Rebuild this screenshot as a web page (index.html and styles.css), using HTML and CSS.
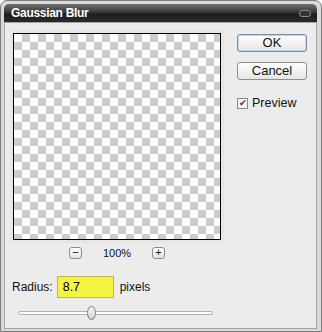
FILE: index.html
```html
<!DOCTYPE html>
<html lang="en">

<head>
    <meta charset="UTF-8">
    <title>Gaussian Blur</title>
    <link rel="stylesheet" href="styles.css">
</head>

<body>
    <div class="window">
        <div class="titlebar">
            <span class="title">Gaussian Blur</span>
            <span class="close"></span>
        </div>
        <div class="client">
            <div class="main">
                <div class="preview"></div>
                <div class="zoomRow">
                    <span class="zoomBtn">&minus;</span>
                    <span class="zoomValue">100%</span>
                    <span class="zoomBtn">+</span>
                </div>
                <div class="radiusRow">
                    <label for="radius">Radius:</label>
                    <input id="radius" class="radiusInput" value="8.7">
                    <span>pixels</span>
                </div>
                <div class="slider">
                    <div class="track"></div>
                    <div class="thumb"></div>
                </div>
            </div>
            <div class="side">
                <button class="btn default">OK</button>
                <button class="btn">Cancel</button>
                <label class="check"><span class="box">&#10004;</span>Preview</label>
            </div>
        </div>
    </div>
</body>

</html>
```

FILE: styles.css
```css
body {
    margin: 0;
    font-family: "Liberation Sans", Arial, sans-serif;
    font-size: 12px;
    color: #111;
}

.window {
    box-sizing: border-box;
    width: 322px;
    height: 332px;
    border: 1px solid #7c7c7c;
    border-radius: 7px 7px 0 0;
    background: #d9d9d9;
    padding: 3px 4px 2px 3px;
    display: flex;
    flex-direction: column;
}

.titlebar {
    height: 18px;
    border-radius: 5px 5px 0 0;
    background: linear-gradient(#707070, #3a3a3a 45%, #1e1e1e 55%, #2a2a2a);
    display: flex;
    align-items: center;
    justify-content: space-between;
    padding: 0 6px 0 7px;
}

.title {
    color: #fff;
    font-weight: bold;
    font-size: 12px;
    letter-spacing: -0.3px;
}

.close {
    width: 10px;
    height: 5px;
    border: 1px solid #8a8a8a;
    border-radius: 3px;
    background: #333;
}

.client {
    flex: 1;
    display: flex;
    border: 1px solid #a4a4a4;
    background: #ececec;
}

.main {
    width: 216px;
    padding: 10px 0 0 8px;
}

.preview {
    width: 206px;
    height: 205px;
    border: 1px solid #000;
    background: repeating-conic-gradient(#cccccc 0 25%, #ffffff 0 50%) 0 0 / 16px 16px;
    box-shadow: 0 0 0 3px #e6e6e6;
}

.zoomRow {
    display: flex;
    justify-content: center;
    align-items: center;
    gap: 21px;
    width: 208px;
    margin-top: 7px;
    font-size: 11px;
}

.zoomBtn {
    width: 11px;
    height: 10px;
    border: 1px solid #8c8c8c;
    border-radius: 3px;
    background: linear-gradient(#fff, #e2e2e2);
    font-size: 11px;
    line-height: 9px;
    text-align: center;
}

.radiusRow {
    display: flex;
    align-items: center;
    gap: 4px;
    margin-top: 17px;
    margin-left: -1px;
    font-size: 12px;
}

.radiusInput {
    box-sizing: border-box;
    width: 57px;
    height: 22px;
    border: 1px solid #c2b83c;
    background: #f4f442;
    font-family: inherit;
    font-size: 12.5px;
    padding: 0 0 0 5px;
    margin-right: 2px;
}

.slider {
    position: relative;
    height: 16px;
    margin: 7px 0 0 5px;
    width: 195px;
}

.track {
    position: absolute;
    left: 0;
    right: 0;
    top: 6px;
    height: 2px;
    border: 1px solid #b0b0b0;
    border-radius: 2px;
    background: #fff;
}

.thumb {
    position: absolute;
    left: 69px;
    top: 1px;
    width: 7px;
    height: 12px;
    border: 1px solid #888;
    border-radius: 50%;
    background: linear-gradient(#fafafa, #d0d0d0);
}

.side {
    display: flex;
    flex-direction: column;
    padding: 11px 0 0 8px;
}

.btn {
    box-sizing: border-box;
    width: 70px;
    height: 18px;
    margin-bottom: 10px;
    border: 1px solid #8f8f8f;
    border-radius: 3px;
    background: linear-gradient(#fdfdfd, #e6e6e6);
    font-family: inherit;
    font-size: 13px;
    color: #111;
    padding: 0;
    line-height: 14px;
}

.btn.default {
    border-color: #7b8fa0;
    box-shadow: inset 0 0 0 1px #bcd6ea;
}

.check {
    display: flex;
    align-items: center;
    gap: 4px;
    margin-top: 6px;
    font-size: 12.5px;
}

.box {
    box-sizing: border-box;
    width: 11px;
    height: 11px;
    border: 1px solid #8a8a8a;
    background: #f4f4f4;
    font-size: 9px;
    line-height: 9px;
    text-align: center;
    color: #2a3f66;
}
```
